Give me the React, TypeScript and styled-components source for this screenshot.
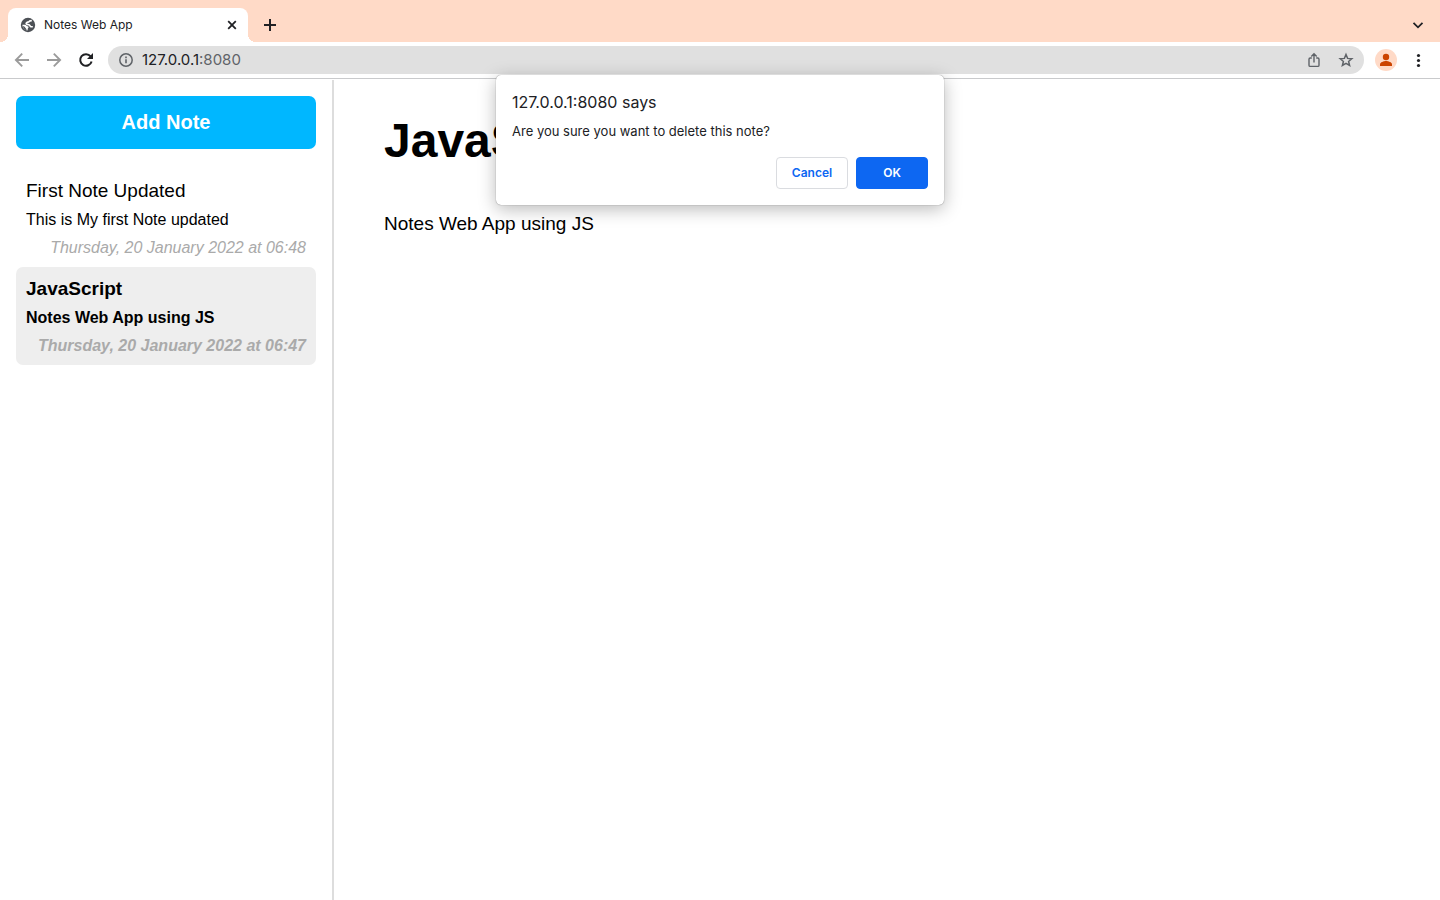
import React from "react";
import styled, { createGlobalStyle } from "styled-components";

const GlobalStyle = createGlobalStyle`
  * { box-sizing: border-box; }
  body { margin: 0; background: #fff; color: #000; }
`;

const uiFont = `Inter, Roboto, sans-serif`;
const pageFont = `"Liberation Sans", Helvetica, Arial, sans-serif`;

const Window = styled.div`
  position: relative;
  display: flex;
  flex-direction: column;
  min-height: 100vh;
`;

const TabStrip = styled.header`
  display: flex;
  align-items: flex-end;
  justify-content: space-between;
  height: 42px;
  padding: 0 10px 0 8px;
  background: #ffdac7;
  font-family: ${uiFont};
`;

const Tabs = styled.div`
  display: flex;
`;

const Tab = styled.div`
  position: relative;
  display: flex;
  align-items: center;
  width: 240px;
  height: 34px;
  padding: 0 8px 0 12px;
  gap: 8px;
  border-radius: 8px 8px 0 0;
  background: #fff;
  color: #202124;
  font-size: 12px;
  line-height: 16px;

  &::before,
  &::after {
    content: "";
    position: absolute;
    bottom: 0;
    width: 8px;
    height: 8px;
  }
  &::before {
    right: 100%;
    background: radial-gradient(circle at 0 0, #ffdac7 8px, #fff 8px);
  }
  &::after {
    left: 100%;
    background: radial-gradient(circle at 100% 0, #ffdac7 8px, #fff 8px);
  }
`;

const TabTitle = styled.span`
  flex: 1;
`;

const IconButton = styled.button<{ $size?: number; $color?: string }>`
  display: flex;
  flex: none;
  align-items: center;
  justify-content: center;
  width: ${(p) => p.$size ?? 32}px;
  height: ${(p) => p.$size ?? 32}px;
  padding: 0;
  border: 0;
  background: none;
  color: ${(p) => p.$color ?? "#202124"};
`;

const StripButton = styled(IconButton)`
  align-self: flex-end;
  height: 34px;
`;

const NewTab = styled(StripButton)`
  margin-left: 8px;
`;

const Toolbar = styled.nav`
  display: flex;
  align-items: center;
  height: 37px;
  padding: 0 6px;
  border-bottom: 1px solid #c9cacc;
  background: #fff;
  font-family: ${uiFont};
`;

const AddressBar = styled.div`
  display: flex;
  flex: 1;
  align-items: center;
  height: 28px;
  margin: 0 6px;
  padding: 0 2px 0 10px;
  border-radius: 14px;
  background: #e0e0e0;
  color: #5f6368;
  font-size: 15px;
  line-height: 20px;
`;

const SiteInfo = styled(IconButton)`
  margin-right: 8px;
`;

const Host = styled.input`
  field-sizing: content;
  padding: 0;
  border: 0;
  outline: 0;
  background: none;
  color: #202124;
  font: inherit;
`;

const Port = styled.span`
  flex: 1;
`;

const Avatar = styled(IconButton)`
  margin: 0 5px;
  border-radius: 50%;
  background: #ffdac7;
`;

const Notes = styled.main`
  display: flex;
  flex: 1;
  margin-top: 1px;
  font-family: ${pageFont};
`;

const Sidebar = styled.aside`
  flex: none;
  width: 334px;
  padding: 16px;
  border-right: 2px solid #ddd;
`;

const AddButton = styled.button`
  display: block;
  width: 100%;
  margin-bottom: 20px;
  padding: 15px 0;
  border: 0;
  border-radius: 7px;
  background: #00b7ff;
  color: #fff;
  font: bold 20px/23px ${pageFont};
`;

const NoteItem = styled.article<{ $selected?: boolean }>`
  padding: 10px;
  border-radius: 7px;
  background: ${(p) => (p.$selected ? "#eee" : "transparent")};
  font-weight: ${(p) => (p.$selected ? "bold" : "normal")};
  font-size: 16px;
  line-height: 18px;
`;

const NoteTitle = styled.div`
  margin-bottom: 8px;
  font-size: 19px;
  line-height: 24px;
`;

const NoteBody = styled.div`
  margin-bottom: 10px;
`;

const NoteDate = styled.time`
  display: block;
  color: #aaa;
  font-style: italic;
  text-align: right;
  white-space: nowrap;
`;

const Editor = styled.section`
  display: flex;
  flex: 1;
  flex-direction: column;
  min-width: 0;
  padding: 32px 50px;
`;

const EditorTitle = styled.input`
  width: 100%;
  height: 58px;
  padding: 0;
  border: 0;
  outline: 0;
  background: none;
  color: #000;
  font: bold 48px/58px ${pageFont};
`;

const EditorBody = styled.textarea`
  flex: 1;
  width: 100%;
  margin-top: 39px;
  padding: 0;
  border: 0;
  outline: 0;
  resize: none;
  background: none;
  color: #000;
  font: 19px/30px ${pageFont};
`;

const Dialog = styled.section`
  position: absolute;
  top: 75px;
  left: 50%;
  width: 448px;
  padding: 16px;
  transform: translateX(-50%);
  border-radius: 5px;
  background: #fff;
  box-shadow: 0 0 1px rgba(0, 0, 0, 0.6), 0 4px 18px rgba(0, 0, 0, 0.28);
  color: #202124;
  font-family: ${uiFont};
`;

const DialogTitle = styled.h2`
  margin: 0 0 8px;
  font-weight: 400;
  font-size: 16px;
  line-height: 22px;
`;

const DialogText = styled.p`
  margin: 0 0 16px;
  font-size: 13px;
  line-height: 20px;
`;

const DialogActions = styled.div`
  display: flex;
  justify-content: flex-end;
  gap: 8px;
`;

const DialogButton = styled.button<{ $primary?: boolean }>`
  width: 72px;
  height: 32px;
  padding: 0;
  border: 1px solid ${(p) => (p.$primary ? "#0d67f2" : "#dadce0")};
  border-radius: 4px;
  background: ${(p) => (p.$primary ? "#0d67f2" : "#fff")};
  color: ${(p) => (p.$primary ? "#fff" : "#0d67f2")};
  font: 600 12px/16px ${uiFont};
`;

type LineIconProps = { size: number; weight: number; d: string };

const LineIcon = ({ size, weight, d }: LineIconProps) => (
  <svg
    width={size}
    height={size}
    viewBox={`0 0 ${size} ${size}`}
    fill="none"
    stroke="currentColor"
    strokeWidth={weight}
    aria-hidden="true"
  >
    <path d={d} />
  </svg>
);

const Globe = () => (
  <svg width="16" height="16" viewBox="0 0 16 16" aria-hidden="true">
    <circle cx="8" cy="8" r="7.2" fill="#4d5156" />
    <path
      d="M11.8 3.600C9.800 3.600 9 4 8.700 4.900C7.400 5 6 5.700 6.100 6.700C6.200 7.700 7.800 7.500 8.900 7.700C10.200 8 9.900 9.500 11 9.700L12.800 9.800"
      fill="none"
      stroke="#fff"
      strokeWidth="1.600"
    />
    <path d="M2.400 7.800H5C6.400 7.800 6.600 9.100 7.600 9.300C8.900 9.500 8.800 11 7.900 11.300L7.500 13.400C4.600 13.200 2.400 10.800 2.400 7.800z" fill="#fff" />
    <path d="M2.900 9.200C4.400 9.200 4.900 9.900 5.300 10.700S6.700 11.600 6.500 13.200C4.700 12.700 3.300 11.300 2.900 9.200z" fill="#4d5156" />
  </svg>
);

const Info = () => (
  <svg width="16" height="16" viewBox="0 0 16 16" aria-hidden="true">
    <circle cx="8" cy="8" r="6.2" fill="none" stroke="currentColor" strokeWidth="1.5" />
    <path d="M7.200 7.200h1.600v4H7.200zM7.200 4.600h1.600v1.600H7.200z" fill="currentColor" />
  </svg>
);

const Reload = () => (
  <svg width="16" height="16" viewBox="0 0 16 16" aria-hidden="true">
    <path d="M12.600 4.400A5.800 5.800 0 1 0 13.600 9.500" fill="none" stroke="currentColor" strokeWidth="2" />
    <path d="M15 1v6H9z" fill="currentColor" />
  </svg>
);

const Person = () => (
  <svg width="16" height="16" viewBox="0 0 16 16" fill="currentColor" aria-hidden="true">
    <circle cx="8" cy="5" r="3.2" />
    <path d="M2 14v-1.500C2 10.300 5.800 9.100 8 9.100s6 1.200 6 3.400V14z" />
  </svg>
);

const Dots = () => (
  <svg width="16" height="16" viewBox="0 0 16 16" fill="currentColor" aria-hidden="true">
    <circle cx="8.5" cy="3.5" r="1.6" />
    <circle cx="8.5" cy="8.5" r="1.6" />
    <circle cx="8.5" cy="13.5" r="1.6" />
  </svg>
);

const notes = [
  {
    title: "First Note Updated",
    body: "This is My first Note updated",
    date: "Thursday, 20 January 2022 at 06:48",
  },
  {
    title: "JavaScript",
    body: "Notes Web App using JS",
    date: "Thursday, 20 January 2022 at 06:47",
    selected: true,
  },
];

export default function App() {
  return (
    <>
      <GlobalStyle />
      <Window>
        <TabStrip>
          <Tabs>
            <Tab>
              <Globe />
              <TabTitle>Notes Web App</TabTitle>
              <IconButton $size={16} aria-label="Close tab">
                <LineIcon size={16} weight={1.8} d="M4.200 4.200l7.600 7.600M11.800 4.200l-7.600 7.600" />
              </IconButton>
            </Tab>
            <NewTab $size={28} aria-label="New tab">
              <LineIcon size={16} weight={2} d="M8 2v12M2 8h12" />
            </NewTab>
          </Tabs>
          <StripButton $size={24} aria-label="Search tabs">
            <LineIcon size={16} weight={1.8} d="M3.500 5.800L8 10.300l4.500-4.500" />
          </StripButton>
        </TabStrip>
        <Toolbar>
          <IconButton $color="#9b9b9b" aria-label="Back">
            <LineIcon size={16} weight={1.9} d="M15 8H2.500M8.200 1.700L1.900 8l6.300 6.300" />
          </IconButton>
          <IconButton $color="#9b9b9b" aria-label="Forward">
            <LineIcon size={16} weight={1.9} d="M1 8h12.500M7.800 1.700L14.100 8l-6.300 6.300" />
          </IconButton>
          <IconButton aria-label="Reload">
            <Reload />
          </IconButton>
          <AddressBar>
            <SiteInfo $size={16} $color="#5f6368" aria-label="Site information">
              <Info />
            </SiteInfo>
            <Host aria-label="Address" defaultValue="127.0.0.1" />
            <Port>:8080</Port>
            <IconButton $color="#5f6368" aria-label="Share">
              <LineIcon
                size={16}
                weight={1.4}
                d="M5.800 6H4.200C3.400 6 3 6.400 3 7.200v6c0 .8.400 1.200 1.200 1.200h7.600c.8 0 1.200-.4 1.200-1.200v-6c0-.8-.4-1.200-1.200-1.200h-1.600M8 10.500V2M5.300 4.500L8 1.800l2.700 2.700"
              />
            </IconButton>
            <IconButton $color="#5f6368" aria-label="Bookmark">
              <LineIcon
                size={16}
                weight={1.5}
                d="M8 2.500l1.600 3.900 4.200.3-3.200 2.700 1 4.100L8 11.300l-3.600 2.200 1-4.100-3.200-2.700 4.200-.3z"
              />
            </IconButton>
          </AddressBar>
          <Avatar $size={22} $color="#cc4400" aria-label="Profile">
            <Person />
          </Avatar>
          <IconButton aria-label="Menu">
            <Dots />
          </IconButton>
        </Toolbar>
        <Notes>
          <Sidebar>
            <AddButton>Add Note</AddButton>
            {notes.map((note) => (
              <NoteItem key={note.title} $selected={note.selected}>
                <NoteTitle>{note.title}</NoteTitle>
                <NoteBody>{note.body}</NoteBody>
                <NoteDate>{note.date}</NoteDate>
              </NoteItem>
            ))}
          </Sidebar>
          <Editor>
            <EditorTitle aria-label="Note title" defaultValue="JavaScript" />
            <EditorBody aria-label="Note text" defaultValue="Notes Web App using JS" />
          </Editor>
        </Notes>
        <Dialog role="alertdialog" aria-labelledby="dialog-title" aria-describedby="dialog-text">
          <DialogTitle id="dialog-title">127.0.0.1:8080 says</DialogTitle>
          <DialogText id="dialog-text">Are you sure you want to delete this note?</DialogText>
          <DialogActions>
            <DialogButton>Cancel</DialogButton>
            <DialogButton $primary>OK</DialogButton>
          </DialogActions>
        </Dialog>
      </Window>
    </>
  );
}
